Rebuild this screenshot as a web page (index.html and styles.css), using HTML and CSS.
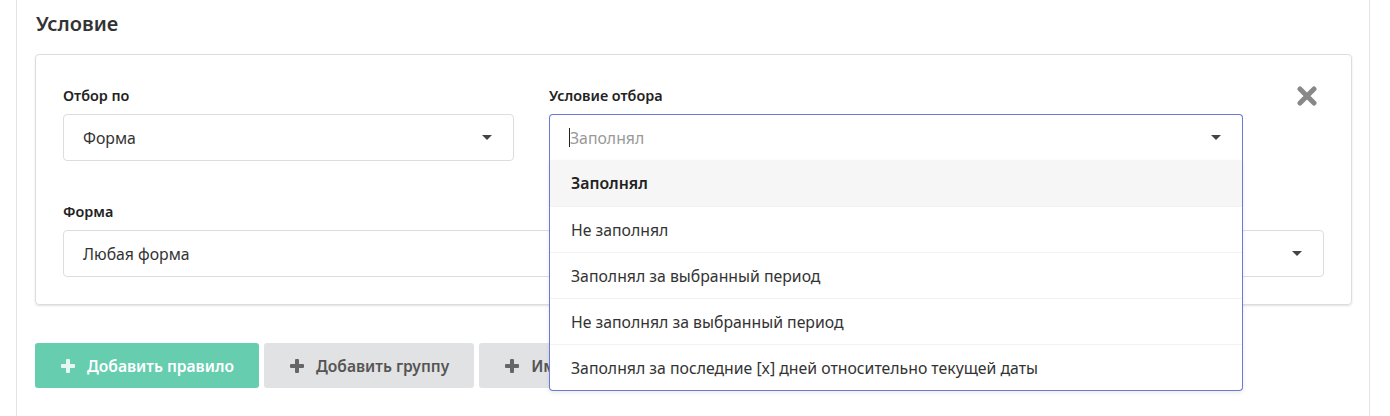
FILE: index.html
```html
<!DOCTYPE html>
<html lang="ru">
<head>
    <meta charset="UTF-8">
    <title>Условие</title>
    <link rel="stylesheet" href="styles.css">
</head>
<body>
    <div class="panel">
        <h2 class="panel-title">Условие</h2>

        <div class="rule-card">
            <div class="rule-row">
                <div class="field field-by">
                    <label class="field-label">Отбор по</label>
                    <div class="select">
                        <span class="select-value">Форма</span>
                        <span class="caret"></span>
                    </div>
                </div>

                <div class="field field-cond">
                    <label class="field-label">Условие отбора</label>
                    <div class="select select-open">
                        <span class="select-input"><span class="cursor"></span>Заполнял</span>
                        <span class="caret"></span>
                        <ul class="select-menu">
                            <li class="option active">Заполнял</li>
                            <li class="option">Не заполнял</li>
                            <li class="option">Заполнял за выбранный период</li>
                            <li class="option">Не заполнял за выбранный период</li>
                            <li class="option">Заполнял за последние [x] дней относительно текущей даты</li>
                        </ul>
                    </div>
                </div>

                <button class="remove-btn" title="Удалить">
                    <svg width="20" height="20" viewBox="0 0 20 20">
                        <path d="M3 3 L17 17 M17 3 L3 17" stroke="#888" stroke-width="5" stroke-linecap="round"/>
                    </svg>
                </button>
            </div>

            <div class="field field-form">
                <label class="field-label">Форма</label>
                <div class="select">
                    <span class="select-value">Любая форма</span>
                    <span class="caret"></span>
                </div>
            </div>
        </div>

        <div class="actions">
            <button class="btn btn-green"><span class="plus"></span>Добавить правило</button>
            <button class="btn btn-gray"><span class="plus"></span>Добавить группу</button>
            <button class="btn btn-gray"><span class="plus"></span>Импортировать условия</button>
        </div>
    </div>
</body>
</html>
```

FILE: styles.css
```css
body {
    margin: 0;
    background: #fff;
    font-family: "Noto Sans", "Open Sans", sans-serif;
    color: #333;
}
.panel {
    margin: 0 20px 0 16px;
    height: 416px;
    border-left: 1px solid #e3e3e3;
    border-right: 1px solid #e3e3e3;
    padding: 0 17px 0 18px;
    box-sizing: border-box;
}
.panel-title {
    margin: 0;
    padding: 10px 0 0 1px;
    height: 54px;
    box-sizing: border-box;
    font-size: 20px;
    font-weight: 600;
    line-height: 28px;
    color: #333;
}
.rule-card {
    border: 1px solid #ddd;
    border-radius: 4px;
    box-shadow: 0 1px 2px rgba(0,0,0,0.12);
    padding: 31px 27px 27px 27px;
}
.rule-row {
    display: flex;
    align-items: flex-start;
}
.field-label {
    display: block;
    font-size: 14.4px;
    font-weight: 600;
    line-height: 20px;
    margin-bottom: 8px;
    color: #222;
}
.field-by { width: 451px; }
.field-cond { width: 694px; margin-left: 35px; }
.field-form { margin-top: 41px; }
.remove-btn {
    margin: 0 0 0 54px;
    padding: 0;
    border: none;
    background: none;
    width: 22px;
    height: 22px;
    cursor: pointer;
    display: flex;
}
.select {
    position: relative;
    height: 47px;
    border: 1px solid #ddd;
    border-radius: 4px;
    box-sizing: border-box;
    display: flex;
    align-items: center;
    padding: 0 19px;
    font-size: 15.8px;
    background: #fff;
}
.select-value { flex: 1; color: #333; }
.caret {
    width: 0;
    height: 0;
    border-left: 5px solid transparent;
    border-right: 5px solid transparent;
    border-top: 5px solid #444;
    margin-right: 2px;
}
.select-open {
    height: 46px;
    border-color: #6b78d6;
    border-bottom: none;
    border-radius: 4px 4px 0 0;
    padding-left: 19px;
}
.select-input {
    flex: 1;
    color: #999;
    display: flex;
    align-items: center;
}
.cursor {
    display: inline-block;
    width: 1px;
    height: 19px;
    background: #222;
}
.select-menu {
    position: absolute;
    left: -1px;
    right: -1px;
    top: 100%;
    margin: 0;
    padding: 0;
    list-style: none;
    background: #fff;
    border: 1px solid #6b78d6;
    border-top: none;
    border-radius: 0 0 4px 4px;
    box-shadow: 0 2px 4px rgba(0,0,0,0.08);
    z-index: 5;
}
.option {
    height: 46px;
    display: flex;
    align-items: center;
    padding: 0 21px;
    font-size: 15.8px;
    color: #333;
    border-top: 1px solid #f2f2f2;
    box-sizing: border-box;
}
.option:first-child { border-top: none; }
.option.active {
    background: #f6f6f6;
    font-weight: 600;
    color: #222;
}
.actions {
    display: flex;
    gap: 5px;
    margin-top: 38px;
}
.btn {
    height: 45px;
    border: none;
    border-radius: 3px;
    font-family: inherit;
    font-size: 15.6px;
    font-weight: 600;
    padding: 0 25px 0 26px;
    display: flex;
    align-items: center;
    gap: 12px;
    cursor: pointer;
    white-space: nowrap;
}
.btn-green { background: #66cdaf; color: #fff; }
.btn-gray { background: #e1e2e4; color: #555; }
.plus {
    position: relative;
    width: 14px;
    height: 14px;
}
.plus::before, .plus::after {
    content: "";
    position: absolute;
    background: currentColor;
    border-radius: 1px;
}
.plus::before { left: 5px; top: 0; width: 4px; height: 14px; }
.plus::after { left: 0; top: 5px; width: 14px; height: 4px; }
.btn-green .plus { color: #e6f7f1; }
.btn-gray .plus { color: #666; }
```
